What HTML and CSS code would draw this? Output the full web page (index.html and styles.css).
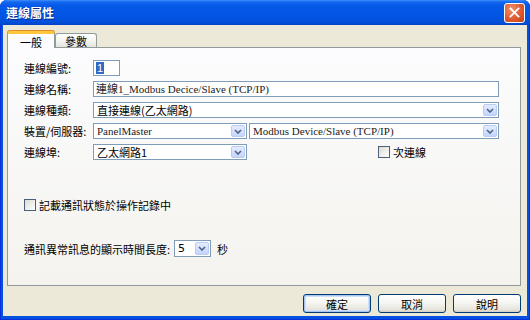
FILE: index.html
```html
<!DOCTYPE html>
<html lang="zh-Hant">
<head>
<meta charset="UTF-8">
<title>連線屬性</title>
<link rel="stylesheet" href="styles.css">
</head>
<body>
<div class="window">
  <div class="titlebar">
    <span class="title">連線屬性</span>
    <span class="close">
      <svg viewBox="0 0 21 21" width="21" height="21">
        <path d="M6 6 L15 15 M15 6 L6 15" stroke="#fff" stroke-width="2" stroke-linecap="square"></path>
      </svg>
    </span>
  </div>
  <div class="client">
    <div class="tabs">
      <div class="tab active">一般</div>
      <div class="tab">參數</div>
    </div>
    <div class="panel">
      <div class="row">
        <span class="label">連線編號:</span>
        <div class="field id"><span class="selected">1</span></div>
      </div>
      <div class="row">
        <span class="label">連線名稱:</span>
        <div class="field wide latin">連線1_Modbus Decice/Slave (TCP/IP)</div>
      </div>
      <div class="row">
        <span class="label">連線種類:</span>
        <div class="field combo wide">
          <span class="value">直接連線(乙太網路)</span>
          <span class="drop"><svg viewBox="0 0 8 5" width="8" height="5"><path d="M1 1 L4 4 L7 1" fill="none" stroke="#4d6185" stroke-width="1.6"></path></svg></span>
        </div>
      </div>
      <div class="row">
        <span class="label">裝置/伺服器:</span>
        <div class="field combo half">
          <span class="value latin">PanelMaster</span>
          <span class="drop"><svg viewBox="0 0 8 5" width="8" height="5"><path d="M1 1 L4 4 L7 1" fill="none" stroke="#4d6185" stroke-width="1.6"></path></svg></span>
        </div>
        <div class="field combo rest">
          <span class="value latin">Modbus Device/Slave (TCP/IP)</span>
          <span class="drop"><svg viewBox="0 0 8 5" width="8" height="5"><path d="M1 1 L4 4 L7 1" fill="none" stroke="#4d6185" stroke-width="1.6"></path></svg></span>
        </div>
      </div>
      <div class="row">
        <span class="label">連線埠:</span>
        <div class="field combo half">
          <span class="value">乙太網路1</span>
          <span class="drop"><svg viewBox="0 0 8 5" width="8" height="5"><path d="M1 1 L4 4 L7 1" fill="none" stroke="#4d6185" stroke-width="1.6"></path></svg></span>
        </div>
        <span class="check secondary"><span class="box"></span>次連線</span>
      </div>
      <div class="row log-row">
        <span class="check"><span class="box"></span>記載通訊狀態於操作記錄中</span>
      </div>
      <div class="row time-row">
        <span class="text">通訊異常訊息的顯示時間長度:</span>
        <div class="field combo tiny">
          <span class="value num">5</span>
          <span class="drop"><svg viewBox="0 0 8 5" width="8" height="5"><path d="M1 1 L4 4 L7 1" fill="none" stroke="#4d6185" stroke-width="1.6"></path></svg></span>
        </div>
        <span class="text unit">秒</span>
      </div>
    </div>
    <div class="footer">
      <button class="btn default">確定</button>
      <button class="btn">取消</button>
      <button class="btn">說明</button>
    </div>
  </div>
</div>
</body>
</html>
```

FILE: styles.css
```css
* {
    margin: 0;
    padding: 0;
    box-sizing: border-box
}

body {
    width: 530px;
    height: 320px;
    overflow: hidden;
    font-family: "Noto Sans CJK TC", "DejaVu Sans", sans-serif;
    font-size: 11px;
    color: #000
}

.window {
    width: 530px;
    height: 320px;
    display: flex;
    flex-direction: column;
    background: #0450e0;
    border-radius: 7px 7px 0 0;
    box-shadow: inset 1px 0 0 #0831d9, inset -1px 0 0 #0831d9, inset 0 -1px 0 #0831d9
}

.titlebar {
    height: 25px;
    flex: none;
    display: flex;
    align-items: center;
    justify-content: space-between;
    padding: 0 5px 0 6px;
    border-radius: 7px 7px 0 0;
    background: linear-gradient(#3e8ff7 0, #1367ef 2px, #0458e6 6px, #0356e4 60%, #0250db 88%, #0243c8 100%)
}

.title {
    color: #fff;
    font-weight: 700;
    font-size: 12px;
    line-height: 14px;
    text-shadow: 1px 1px 0 #0c2a8a
}

.close {
    width: 21px;
    height: 20px;
    display: flex;
    align-items: center;
    justify-content: center;
    border: 1px solid #fff;
    border-radius: 3px;
    background: radial-gradient(circle at 35% 30%, #f0916c 0, #e05a30 55%, #c23f14 100%)
}

.client {
    flex: 1;
    display: flex;
    flex-direction: column;
    margin: 0 3px 4px 3px;
    padding: 6px 6px 3px 4px;
    background: #ece9d8
}

.tabs {
    display: flex;
    align-items: flex-end;
    height: 16px;
    flex: none
}

.tab {
    height: 14px;
    width: 42px;
    display: flex;
    align-items: center;
    justify-content: center;
    border: 1px solid #919b9c;
    border-bottom: none;
    border-radius: 3px 3px 0 0;
    background: linear-gradient(#ffffff, #f3f3ef 60%, #e3e2da);
    font-size: 11px;
    line-height: 12px
}

.tab.active {
    position: relative;
    z-index: 1;
    width: 48px;
    height: 17px;
    margin-bottom: -1px;
    padding-top: 2px;
    background: #fcfcfe;
    border-top: 3px solid #ffc83c;
    box-shadow: 0 -1px 0 #e68b2c
}

.panel {
    height: 239px;
    flex: none;
    display: flex;
    flex-direction: column;
    gap: 5px;
    padding: 12px 0 0 16px;
    border: 1px solid #919b9c;
    background: linear-gradient(#fcfcfe, #f4f3ee)
}

.row {
    display: flex;
    align-items: center;
    height: 16px
}

.label {
    width: 69px;
    flex: none;
    line-height: 14px;
    white-space: nowrap
}

.field {
    height: 16px;
    border: 1px solid #7f9db9;
    background: #fff;
    display: flex;
    align-items: center;
    padding-left: 2px;
    line-height: 14px;
    white-space: nowrap;
    overflow: hidden
}

.latin,
.value.latin {
    font-family: "Liberation Serif", "Noto Sans CJK TC", serif;
    font-size: 11px;
    color: #222
}

.field.id {
    width: 27px;
    font-family: "Liberation Sans", sans-serif
}

.selected {
    background: #316ac5;
    color: #fff;
    padding: 0 1px;
    line-height: 12px
}

.wide {
    width: 406px
}

.half {
    width: 154px
}

.rest {
    width: 250px;
    margin-left: 2px
}

.tiny {
    width: 37px;
    height: 17px
}

.combo {
    justify-content: space-between;
    padding: 1px
}

.combo .value {
    padding-left: 2px
}

.value.num {
    font-family: "DejaVu Sans", sans-serif;
    font-size: 11px
}

.drop {
    width: 14px;
    height: 100%;
    flex: none;
    display: flex;
    align-items: center;
    justify-content: center;
    border: 1px solid #bccbf2;
    border-radius: 2px;
    background: linear-gradient(#e4ecfe, #c3d5fc)
}

.check {
    display: flex;
    align-items: center;
    gap: 3px;
    line-height: 14px;
    white-space: nowrap
}

.box {
    width: 12px;
    height: 12px;
    border: 1px solid #4a607a;
    background: linear-gradient(135deg, #dcdcd4, #fff)
}

.secondary {
    margin-left: 131px
}

.log-row {
    margin-top: 31px;
    height: 17px
}

.time-row {
    margin-top: 22px;
    height: 17px
}

.text {
    line-height: 14px;
    white-space: nowrap
}

.time-row .field {
    margin-left: 4px
}

.unit {
    margin-left: 6px
}

.footer {
    display: flex;
    justify-content: flex-end;
    gap: 7px;
    margin-top: 8px
}

.btn {
    width: 68px;
    height: 19px;
    border: 1px solid #003c74;
    border-radius: 3px;
    background: linear-gradient(#ffffff, #f4f4f0 50%, #e6e4dc 85%, #d6d0c5);
    font-family: "Noto Sans CJK TC", sans-serif;
    font-size: 11px;
    line-height: 14px;
    color: #000
}

.btn.default {
    box-shadow: inset 0 0 0 1px #a8c6f0, inset 0 0 0 2px #cee0fa
}
```
